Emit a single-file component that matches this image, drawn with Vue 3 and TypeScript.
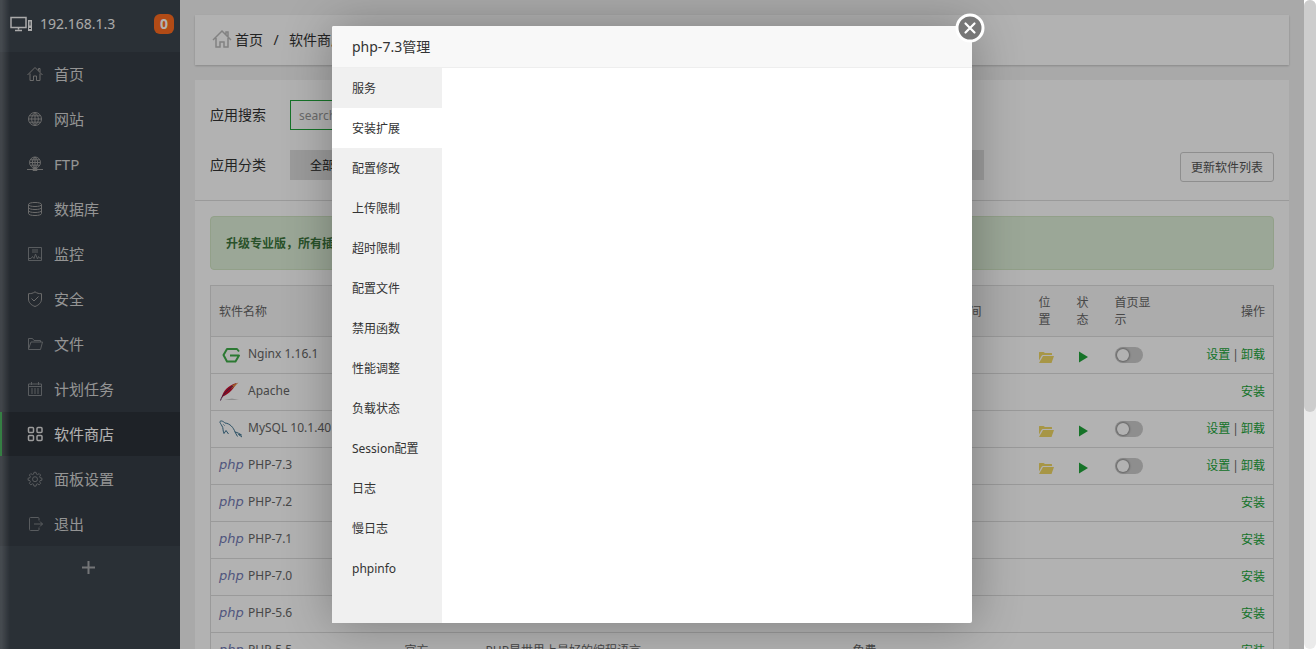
<script setup lang="ts">
import { ref } from 'vue'

interface MenuItem { label: string; icon: string; soft?: boolean }
interface Software {
  name: string
  logo: 'nginx' | 'apache' | 'mysql' | 'php'
  installed: boolean
  vendor?: string
  note?: string
  price?: string
}

const menu: MenuItem[] = [
  { label: '首页', icon: 'M.5 9 8 1.500 15.500 9M3 7.500v7h3.500V10h3v4.500H13v-7M11.500 4.500V2.500H13v3.500' },
  { label: '网站', icon: 'M8 1.5a6.5 6.5 0 1 0 0 13a6.5 6.5 0 1 0 0-13M8 1.5v13M1.5 8h13M8 1.5c-4.5 3.5-4.500 9.500 0 13M8 1.500c4.500 3.500 4.500 9.500 0 13M2.500 4.800h11M2.500 11.200h11' },
  { label: 'FTP', icon: 'M8 1a5.500 5.500 0 1 0 0 11a5.500 5.500 0 1 0 0-11M8 1v12M2.500 6.500h11M8 1c-3.500 3-3.500 8 0 11M8 1c3.500 3 3.500 8 0 11M3.500 3.800h9M3.500 9.200h9M0 13.500h16M6 12.500h4v2H6z' },
  { label: '数据库', icon: 'M1.500 3.500c0-2.700 13-2.700 13 0s-13 2.700-13 0M1.500 3.500v9c0 2.700 13 2.700 13 0v-9M1.500 6.500c0 2.700 13 2.700 13 0M1.500 9.500c0 2.700 13 2.700 13 0' },
  { label: '监控', icon: 'M1.500 1.500h13v13h-13zM5 4h6M5 6h6M2 12.500h2l1.500-2 1.500 2L8.500 8l2 5 1-2.500 1 1.500H14', soft: true },
  { label: '安全', icon: 'M8 .8C6 2.300 4 2.700 1.500 2.700V8c0 3.500 2.500 6 6.500 7.500 4-1.500 6.500-4 6.500-7.500V2.700C12 2.700 10 2.300 8 .8M4.500 7.500 7 10l4.500-4.500' },
  { label: '文件', icon: 'M1.500 13V2.500h4l1.500 2h6.500v1.500M1.500 13 4 6h11.500l-2 7.500h-12z', soft: true },
  { label: '计划任务', icon: 'M1.500 3h13v11.500h-13zM1.500 5.500h13M4.500 1v3M11.500 1v3M4 8h2M7 8h2M10 8h2M4 10h2M7 10h2M10 10h2M4 12h2M7 12h2M10 12h2', soft: true },
  { label: '软件商店', icon: 'M2.500 1.500h3a1 1 0 0 1 1 1v3a1 1 0 0 1-1 1h-3a1 1 0 0 1-1-1v-3a1 1 0 0 1 1-1M11 1.500h3a1 1 0 0 1 1 1v3a1 1 0 0 1-1 1h-3a1 1 0 0 1-1-1v-3a1 1 0 0 1 1-1M2.500 9.500h3a1 1 0 0 1 1 1v3a1 1 0 0 1-1 1h-3a1 1 0 0 1-1-1v-3a1 1 0 0 1 1-1M11 9.500h3a1 1 0 0 1 1 1v3a1 1 0 0 1-1 1h-3a1 1 0 0 1-1-1v-3a1 1 0 0 1 1-1' },
  { label: '面板设置', icon: 'M6.500 3.200 7 1.300h2l.5 1.900 1 .4 1.700-1 1.400 1.400-1 1.700.4 1 1.900.5v2l-1.900.5-.4 1 1 1.700-1.400 1.400-1.700-1-1 .4-.5 1.900H7l-.5-1.900-1-.4-1.700 1-1.400-1.400 1-1.700-.4-1-1.900-.5v-2L3 6.700l.4-1-1-1.700 1.400-1.400 1.700 1zM8 5.700a2.500 2.500 0 1 0 0 5a2.500 2.500 0 1 0 0-5', soft: true },
  { label: '退出', icon: 'M12 4.500v-2a1 1 0 0 0-1-1H3.500a1 1 0 0 0-1 1v11a1 1 0 0 0 1 1H11a1 1 0 0 0 1-1v-2M7 8h8.500M13 5.500 15.500 8 13 10.500', soft: true },
]
const activeMenu = '软件商店'

const software: Software[] = [
  { name: 'Nginx 1.16.1', logo: 'nginx', installed: true },
  { name: 'Apache', logo: 'apache', installed: false },
  { name: 'MySQL 10.1.40', logo: 'mysql', installed: true },
  { name: 'PHP-7.3', logo: 'php', installed: true },
  { name: 'PHP-7.2', logo: 'php', installed: false },
  { name: 'PHP-7.1', logo: 'php', installed: false },
  { name: 'PHP-7.0', logo: 'php', installed: false },
  { name: 'PHP-5.6', logo: 'php', installed: false },
  { name: 'PHP-5.5', logo: 'php', installed: false, vendor: '官方', note: 'PHP是世界上最好的编程语言', price: '免费' },
]

const tabs = ['服务', '安装扩展', '配置修改', '上传限制', '超时限制', '配置文件', '禁用函数', '性能调整', '负载状态', 'Session配置', '日志', '慢日志', 'phpinfo']
const activeTab = ref('安装扩展')
const keyword = ref('')
const dialogOpen = ref(true)
</script>

<template>
  <div class="shell" lang="zh-CN">
    <div class="page">
      <aside class="sidebar">
        <header class="host">
          <svg class="host-icon" width="24" height="18" viewBox="0 0 24 18" aria-hidden="true">
            <path d="M2 2.500h15v10H2zM9.500 12.500v2M6 15.500h7" fill="none" stroke="currentColor" stroke-width="1.500" />
            <path d="M19 5h4v11h-4z" fill="currentColor" />
            <path d="M21 6.500v4M20 13.500h2" stroke="#3f464e" />
          </svg>
          <span class="host-name">192.168.1.3</span>
          <span class="badge">0</span>
        </header>
        <nav class="menu">
          <a v-for="item in menu" :key="item.label" href="#" :class="['menu-item', { active: item.label === activeMenu, soft: item.soft }]">
            <svg width="16" height="16" viewBox="0 0 16 16" aria-hidden="true"><path :d="item.icon" /></svg>
            <span>{{ item.label }}</span>
          </a>
        </nav>
        <button class="add" type="button" aria-label="+">
          <svg width="13" height="13" viewBox="0 0 13 13" aria-hidden="true"><path d="M6.500 0v13M0 6.500h13" stroke="currentColor" stroke-width="2" /></svg>
        </button>
      </aside>

      <main class="main">
        <nav class="crumbs">
          <svg width="20" height="20" viewBox="0 0 20 20" aria-hidden="true">
            <path d="M1 11 10 2l9 9M4 9v9h4v-5h4v5h4V9M14 5.500V3h2v4.500" fill="none" stroke="currentColor" stroke-width="1.500" />
          </svg>
          <a href="#">首页</a><span class="slash">/</span><span>软件商店</span>
        </nav>

        <section class="panel">
          <div class="filters">
            <div class="field">
              <label for="keyword">应用搜索</label>
              <input id="keyword" v-model="keyword" class="search" type="text" placeholder="search" />
            </div>
            <div class="field category">
              <span class="field-name">应用分类</span>
              <div class="types"><button type="button">全部</button></div>
              <button class="refresh" type="button">更新软件列表</button>
            </div>
          </div>

          <div class="notice">升级专业版，所有插件，免费使用</div>

          <table class="list">
            <colgroup>
              <col class="w-name" /><col class="w-mid" /><col /><col class="w-mid" /><col class="w-date" />
              <col class="w-tiny" /><col class="w-tiny" /><col class="w-home" /><col class="w-ops" />
            </colgroup>
            <thead>
              <tr>
                <th>软件名称</th><th>开发商</th><th>说明</th><th>价格</th><th>到期时间</th>
                <th>位置</th><th>状态</th><th>首页显示</th><th class="right">操作</th>
              </tr>
            </thead>
            <tbody>
              <tr v-for="row in software" :key="row.name">
                <td>
                  <div class="product">
                    <svg v-if="row.logo === 'nginx'" width="24" height="20" viewBox="0 0 24 20" aria-hidden="true">
                      <path d="M20 7.500 18 5H8L4.500 11 8 17.500h8.500L20 11.500h-9" fill="none" stroke="#3fae49" stroke-width="2" stroke-linejoin="round" />
                    </svg>
                    <svg v-else-if="row.logo === 'apache'" width="24" height="20" viewBox="0 0 24 20" aria-hidden="true">
                      <path d="M5 19h15l-7-1.500z" fill="#ccc" />
                      <path d="M2.500 17C4 10 9 4.500 17.500 2 15 7 11 12.500 4 15.500z" fill="#c8102f" />
                      <path d="M13.500 4 19.500 1.500 16 5 12 8z" fill="#e0883c" />
                      <path d="M1.500 19.500C3 14.500 8 9 14 5" fill="none" stroke="#5c2257" />
                    </svg>
                    <svg v-else-if="row.logo === 'mysql'" width="24" height="20" viewBox="0 0 24 20" aria-hidden="true">
                      <path d="M5 15.500C3.500 12 4.500 10 3 8 2 6 .500 4.500 1 3.500c1.500-1.500 4 .500 5 1.500 5 .500 8.500 4.500 10 9 2.500.500 5 2 6.500 3l-3-.500 3.500 2.500M5 15.500l2-3 2.500 3.500M16 14l2.500 4.500M4.500 6.500l1 1" fill="none" stroke="#3e7390" />
                    </svg>
                    <span v-else class="php" aria-hidden="true">php</span>
                    <span>{{ row.name }}</span>
                  </div>
                </td>
                <td>{{ row.vendor }}</td>
                <td>{{ row.note }}</td>
                <td>{{ row.price }}</td>
                <td></td>
                <td>
                  <svg v-if="row.installed" class="glyph" width="16" height="14" viewBox="0 0 16 14" aria-hidden="true">
                    <path d="M0 10.500V2.500Q0 2 .500 2H4.500L6 3h6.500q.500 0 .500.500V5H4Q3 5 2.500 6z" fill="#f0d765" />
                    <path d="M4 6h11L12.500 13H0z" fill="#f0d765" />
                  </svg>
                </td>
                <td>
                  <svg v-if="row.installed" class="glyph" width="14" height="14" viewBox="0 0 14 14" aria-hidden="true"><path d="M2 1.500 11 7l-9 5.500z" fill="#20a53a" /></svg>
                </td>
                <td><input v-if="row.installed" class="switch" type="checkbox" :aria-label="row.name" /></td>
                <td class="right">
                  <template v-if="row.installed"><a href="#">设置</a><span class="bar">|</span><a href="#">卸载</a></template>
                  <a v-else href="#">安装</a>
                </td>
              </tr>
            </tbody>
          </table>
        </section>
      </main>

      <div v-if="dialogOpen" class="mask">
        <section class="dialog" role="dialog" aria-labelledby="dialog-title">
          <h2 id="dialog-title">php-7.3管理</h2>
          <div class="dialog-body">
            <div class="tabs" role="tablist">
              <button v-for="tab in tabs" :key="tab" type="button" role="tab" :aria-selected="tab === activeTab" :class="{ on: tab === activeTab }" @click="activeTab = tab">{{ tab }}</button>
            </div>
            <div class="pane" role="tabpanel"></div>
          </div>
          <button class="close" type="button" aria-label="关闭" @click="dialogOpen = false">
            <svg width="30" height="30" viewBox="0 0 30 30" aria-hidden="true">
              <circle cx="15" cy="15" r="13" fill="#777" stroke="#fff" stroke-width="3" />
              <path d="m10.500 10.500 9 9m0-9-9 9" stroke="#fff" stroke-width="2.200" stroke-linecap="round" />
            </svg>
          </button>
        </section>
      </div>
    </div>
    <div class="track" aria-hidden="true"><div class="thumb"></div></div>
  </div>
</template>

<style>
body { margin: 0; overflow: hidden; background: #fff; }
</style>

<style scoped>
.shell, .shell * { box-sizing: border-box; }
.shell { display: flex; height: 100vh; font: 12px/17px "Noto Sans", "Noto Sans CJK SC", sans-serif; color: #666; }
.shell button, .shell input { font-family: inherit; }
.shell a { text-decoration: none; }
.shell svg { display: block; flex: none; }
.page { position: relative; display: flex; flex: 1; min-width: 0; overflow: hidden; background: #f3f3f3; }

.sidebar { position: relative; flex: none; width: 180px; background: #3d454e; color: #d8d8d8; }
.sidebar::after { content: ""; position: absolute; inset: 0 auto 0 0; width: 10px; background: linear-gradient(90deg, rgba(255, 255, 255, .2) 15%, rgba(255, 255, 255, 0)); }
.host { display: flex; align-items: center; height: 52px; padding: 0 6px 4px 9px; }
.host-icon { color: #f4f4f4; }
.host-name { flex: 1; margin-left: 7px; padding-bottom: 2px; font-size: 14px; color: #f2f2f2; }
.badge { width: 20px; height: 20px; border-radius: 6px; background: #ff6c20; color: #fff; font-weight: 700; font-size: 14px; line-height: 20px; text-align: center; }
.menu { display: grid; gap: 1px; background: #363d45; }
.menu-item { display: flex; align-items: center; gap: 11px; height: 44px; padding-left: 27px; color: #d5d5d5; font-size: 15px; }
.menu-item svg { fill: none; stroke: #999; }
.menu-item.soft svg { stroke: #808488; }
.menu-item.active { padding-left: 25px; border-left: 2px solid #20a53a; background: #2c3138; color: #fff; }
.menu-item.active svg { stroke: #e0e0e0; stroke-width: 1.500; }
.add { display: flex; align-items: center; justify-content: center; width: 100%; height: 42px; padding: 0 4px 0 0; border: 0; background: none; color: #a5a8ab; }

.main { flex: 1; min-width: 0; padding: 15px; }
.crumbs { display: flex; align-items: center; height: 50px; margin-bottom: 15px; padding: 0 17px 2px; background: #fff; box-shadow: 0 1px 2px rgba(0, 0, 0, .2); color: #333; font-size: 14px; }
.crumbs svg { margin-right: 3px; color: #bbb; }
.crumbs a { color: #333; }
.slash { width: 26px; text-align: center; }
.panel { min-height: 100%; background: #fff; }
.filters { padding: 20px 15px; border-bottom: 1px solid #ddd; }
.field { display: flex; align-items: center; height: 30px; color: #333; font-size: 14px; }
.field label, .field-name { width: 80px; padding-bottom: 2px; }
.search { width: 200px; height: 30px; padding: 0 8px; border: 1px solid #20a53a; outline: 0; background: #fff; font-size: 12px; }
.search::placeholder { color: #999; }
.category { margin-top: 20px; }
.types { width: 694px; background: #e2e2e2; }
.types button { height: 30px; padding: 0 20px; border: 0; background: #dedede; color: #222; font-size: 12px; }
.refresh { height: 30px; margin: 4px 0 0 auto; padding: 0 10px; border: 1px solid #ccc; border-radius: 3px; background: #fff; color: #555; font-size: 12px; }
.notice { margin: 15px; padding: 18px 15px 17px; border: 1px solid #d1e6c4; border-radius: 4px; background: #dff0d8; color: #3c763d; font-weight: 700; line-height: 17px; }

.list { width: calc(100% - 30px); margin: 0 15px; border: 1px solid #ddd; border-collapse: collapse; table-layout: fixed; }
.list th, .list td { border-bottom: 1px solid #ddd; text-align: left; font-weight: 400; }
.list th { height: 51px; padding: 8px; background: #f6f6f6; }
.list td { height: 37px; padding: 0 8px 1px; white-space: nowrap; }
.list .right { text-align: right; }
.list a { color: #20a53a; }
.w-name { width: 186px; }
.w-mid { width: 81px; }
.w-date { width: 105px; }
.w-tiny { width: 38px; }
.w-home { width: 60px; }
.w-ops { width: 107px; }
.product { display: flex; align-items: center; gap: 5px; padding-bottom: 2px; }
.php { width: 24px; color: #747bb5; font: italic 200 13px/17px "DejaVu Sans", sans-serif; }
.bar { padding: 0 2px; }
.glyph { margin-top: 4px; }
.switch { display: block; appearance: none; width: 28px; height: 16px; margin: 0; border-radius: 8px; background: #ccc; }
.switch::before { content: ""; display: block; width: 12px; height: 12px; margin: 2px; border-radius: 50%; background: #fff; box-shadow: 0 0 2px 1px rgba(0, 0, 0, .3); }

.mask { position: absolute; inset: 0; z-index: 2; display: flex; align-items: center; justify-content: center; background: rgba(0, 0, 0, .3); }
.dialog { position: relative; width: 640px; background: #fff; border-radius: 2px; box-shadow: 1px 1px 50px rgba(0, 0, 0, .3); color: #333; }
.dialog h2 { height: 42px; margin: 0; padding: 0 20px; border-bottom: 1px solid #eee; border-radius: 2px 2px 0 0; background: #f8f8f8; font-size: 14px; font-weight: 400; line-height: 42px; }
.dialog-body { display: flex; min-height: 555px; }
.tabs { width: 110px; background: #f0f0f0; }
.tabs button { display: block; width: 100%; height: 40px; padding: 0 0 0 20px; border: 0; background: none; color: #333; font-size: 12px; text-align: left; }
.tabs .on { background: #fff; }
.pane { flex: 1; }
.close { position: absolute; top: -13px; right: -13px; padding: 0; border: 0; background: none; }

.track { flex: none; width: 12px; border-radius: 6px; background: #ebebeb; }
.thumb { height: 63.5%; border-radius: 6px; background: #cdcdcd; }
</style>
